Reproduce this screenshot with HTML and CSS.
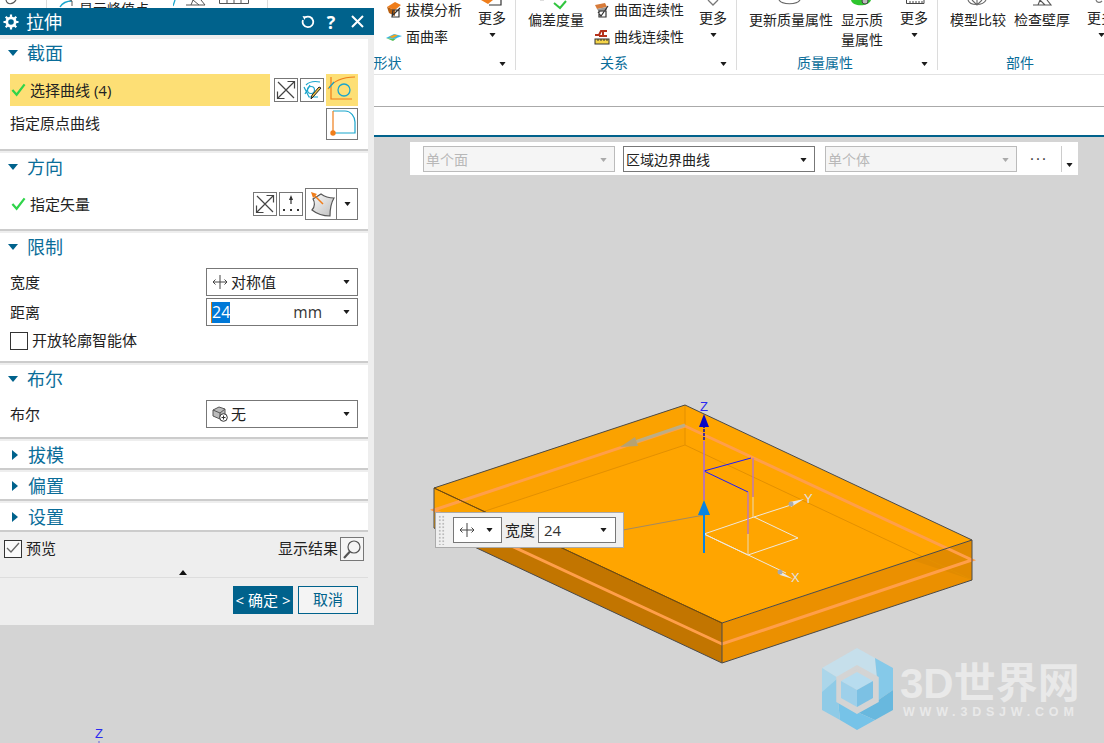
FILE: index.html
```html
<!DOCTYPE html>
<html lang="zh">
<head>
<meta charset="utf-8">
<title>拉伸</title>
<link rel="stylesheet" href="styles.css">
</head>
<body>
<svg class="defs" width="0" height="0" aria-hidden="true">
  <defs>
    <linearGradient id="g-sheet" x1="0" y1="0" x2="1" y2="1"><stop offset="0" stop-color="#fafafa"/><stop offset="1" stop-color="#bdbdbd"/></linearGradient>
  </defs>
  <symbol id="i-check" viewBox="0 0 16 16"><path d="M1.500 8.500 L6 13.500 L14.500 2.500" fill="none" stroke="#2fd44a" stroke-width="2.400"/></symbol>
  <symbol id="i-cross" viewBox="0 0 22 22"><path d="M3 3 L19 19 M19 3 L3 19" stroke="#444" stroke-width="1.200" fill="none"/><path d="M12.500 2.500 H19.500 V9.500 M2.500 12.500 V19.500 H9.500" stroke="#444" stroke-width="1.200" fill="none"/></symbol>
  <symbol id="i-caret" viewBox="0 0 8 5"><path d="M0 0 H8 L4 5 Z" fill="#1c1c1c"/></symbol>
  <symbol id="i-width" viewBox="0 0 16 16"><path d="M8 1 V15 M1 8 H15 M3.500 5.500 L1 8 L3.500 10.500 M12.500 5.500 L15 8 L12.500 10.500" stroke="#444" stroke-width="1" fill="none"/></symbol>
</svg>

<div class="app">
  <header class="ribbon">
    <section class="group g0">
      <div class="group-body"><svg class="peek peek-a" width="14" height="6" viewBox="0 0 14 6"><path d="M2 0 C3 5 9 5 12 0" fill="none" stroke="#555" stroke-width="1.200"/></svg></div>
    </section>
    <section class="group g1">
      <div class="group-body">
        <svg class="peek peek-b" width="14" height="10" viewBox="0 0 14 10"><path d="M1 9 C4 4 8 3 13 3" fill="none" stroke="#19a5cc" stroke-width="1.400"/><path d="M9 1 L13 3 V8" fill="none" stroke="#555"/></svg>
        <span class="peek-text">显示峰值点</span>
        <svg class="peek peek-c" width="36" height="8" viewBox="0 0 36 8"><path d="M0 6 L2 0" stroke="#19a5cc" stroke-width="1.300"/><path d="M13 5 H32 L28 0 M18 5 L20 0 L26 5" fill="none" stroke="#555"/></svg>
        <svg class="peek peek-d" width="30" height="4" viewBox="0 0 30 4"><path d="M0.500 0 V3.500 H29.500 V0 M8 0 V3 M15 0 V3 M22 0 V3" fill="none" stroke="#555"/></svg>
      </div>
    </section>
    <section class="group g2">
      <div class="group-body">
        <div class="tools tools-shape">
          <div class="tool"><svg class="icon16" viewBox="0 0 16 16"><path d="M1 5 L9 0 L15 3 L9 8 Z" fill="#ef7d1a"/><path d="M1 5 L9 8 V14 L3 11 Z" fill="#b85f10"/><path d="M6 14 L14 6 M7 8 H13 V15 H6 Z" fill="none" stroke="#333" stroke-width="1.200"/></svg><span>拔模分析</span></div>
          <div class="tool"><svg class="icon16" viewBox="0 0 16 16"><path d="M0 9 L8 5 L16 7 L8 10 Z" fill="#35b6e8"/><path d="M3 8 L9 5.500 L12 6.500 L7 9 Z" fill="#f4a21e"/><path d="M0 9 L8 10 L11 9 L7 12 Z" fill="#57c05a"/></svg><span>面曲率</span></div>
        </div>
        <div class="more more-shape">
          <svg class="more-peek" width="22" height="8" viewBox="0 0 22 8"><path d="M0 0 H12 L7 4 Z" fill="#ef7d1a"/><path d="M8 5 H20 V0" fill="none" stroke="#333" stroke-width="1.200"/></svg>
          <span>更多</span>
          <svg class="caret" viewBox="0 0 8 5"><use href="#i-caret"/></svg>
        </div>
      </div>
      <div class="group-label label-shape"><span>形状</span><svg class="caret-end" viewBox="0 0 8 5"><use href="#i-caret"/></svg></div>
    </section>
    <section class="group g3">
      <div class="group-body">
        <div class="big big-dev">
          <svg class="big-peek" width="56" height="10" viewBox="0 0 56 10"><path d="M26 3 L32 8 L38 1" fill="none" stroke="#31c53f" stroke-width="2"/><path d="M12 0 H16" stroke="#bbb"/></svg>
          <span>偏差度量</span>
        </div>
        <div class="tools tools-rel">
          <div class="tool"><svg class="icon16" viewBox="0 0 16 16"><path d="M1 3 L11 1 L13 5 L3 7 Z" fill="#d77b3a"/><path d="M3 7 L13 5 L13 8 L5 10 Z" fill="#999"/><path d="M4 10 L7 14 L14 4 M5 9 H12 V15 H5 Z" fill="none" stroke="#333" stroke-width="1.200"/></svg><span>曲面连续性</span></div>
          <div class="tool"><svg class="icon16" viewBox="0 0 16 16"><path d="M1 6 H5 L7 2 H13 M9 2 V7 M5 7 H13" fill="none" stroke="#b5321c" stroke-width="2"/><rect x="1" y="10" width="14" height="5" fill="#f5d54a" stroke="#333" stroke-width="1"/><path d="M4 10 V12 M7 10 V12 M10 10 V12 M13 10 V12" stroke="#333"/></svg><span>曲线连续性</span></div>
        </div>
        <div class="more more-rel">
          <svg class="more-peek" width="14" height="8" viewBox="0 0 14 8"><path d="M2 0 L7 5 L12 0" fill="none" stroke="#777" stroke-width="1.300"/></svg>
          <span>更多</span>
          <svg class="caret" viewBox="0 0 8 5"><use href="#i-caret"/></svg>
        </div>
      </div>
      <div class="group-label label-left"><span>关系</span><svg class="caret-end" viewBox="0 0 8 5"><use href="#i-caret"/></svg></div>
    </section>
    <section class="group g4">
      <div class="group-body">
        <div class="big big-update">
          <svg class="big-peek" width="84" height="10" viewBox="0 0 84 10"><path d="M30 0 C33 5 48 5 51 0" fill="none" stroke="#666" stroke-width="1.200"/></svg>
          <span>更新质量属性</span>
        </div>
        <div class="big big-show">
          <svg class="big-peek" width="42" height="10" viewBox="0 0 42 10"><path d="M10 0 C11 7 28 7 30 0 Z" fill="#2ec52e"/><circle cx="24" cy="1" r="3" fill="#bbb" stroke="#444"/></svg>
          <span>显示质<br>量属性</span>
        </div>
        <div class="more more-mass">
          <svg class="more-peek" width="22" height="8" viewBox="0 0 22 8"><path d="M3.500 0 V3.500 H21 V0 M7 3 V1 M10 3 V1 M13 3 V1 M16 3 V1 M19 3 V1" fill="none" stroke="#444"/></svg>
          <span>更多</span>
          <svg class="caret" viewBox="0 0 8 5"><use href="#i-caret"/></svg>
        </div>
      </div>
      <div class="group-label label-left"><span>质量属性</span><svg class="caret-end" viewBox="0 0 8 5"><use href="#i-caret"/></svg></div>
    </section>
    <section class="group g5">
      <div class="group-body">
        <div class="big big-model">
          <svg class="big-peek" width="56" height="10" viewBox="0 0 56 10"><path d="M18 0 C20 6 33 6 36 0 M27 5 V0 M22 0 L27 5 L32 0" fill="none" stroke="#666" stroke-width="1.100"/></svg>
          <span>模型比较</span>
        </div>
        <div class="big big-wall">
          <svg class="big-peek" width="56" height="10" viewBox="0 0 56 10"><path d="M19 5 H37 L33 0 M24 5 L26 0 L31 5" fill="none" stroke="#555" stroke-width="1.100"/></svg>
          <span>检查壁厚</span>
        </div>
        <div class="more more-part">
          <svg class="more-peek" width="14" height="8" viewBox="0 0 14 8"><path d="M2 0 C3 3 6 3 8 1" fill="none" stroke="#777" stroke-width="1.200"/></svg>
          <span>更多</span>
          <svg class="caret" viewBox="0 0 8 5"><use href="#i-caret"/></svg>
        </div>
      </div>
      <div class="group-label label-part"><span>部件</span></div>
    </section>
  </header>

  <div class="band band-one"></div>
  <div class="band band-two"></div>

  <main class="viewport">
    <svg class="scene" viewBox="0 137 1104 606" width="1104" height="606">
      <polygon points="434,488 722,623 722,663 434,528" fill="#c27500"/>
      <polygon points="722,623 972,540 972,580 722,663" fill="#eb9000"/>
      <polygon points="434,488 685,405 972,540 722,623" fill="#ffa500"/>
      <polygon points="685,405 685,445 434,528 434,488" fill="#fba200"/>
      <polygon points="912,560 972,540 972,580" fill="#e28b00"/>
      <path d="M434 528 L685 445 L972 580 M685 405 V445" fill="none" stroke="#e39000" stroke-width="1"/>
      <path d="M434 510 L685 426 L972 560 L722 644 Z" fill="none" stroke="#ff9f4a" stroke-width="3"/>
      <path d="M434 488 L685 405 L972 540 L722 623 Z M434 488 V528 L722 663 L972 580 V540 M722 623 V663" fill="none" stroke="#4a4a4a" stroke-width="1"/>
      <path d="M434 488 L722 623" stroke="#7a4c00" stroke-width="1"/>

      <path d="M685 425 L632 443" stroke="#bcae86" stroke-width="3"/>
      <path d="M620 447 L635 437 L638 446 Z" fill="#b5a274"/>

      <path d="M623 530 L704 515" stroke="#a68a5e" stroke-width="1.200"/>

      <path d="M704 534 L754 517 L798 538 L748 555 Z" fill="none" stroke="#eee8de" stroke-width="1"/>
      <path d="M754 517 L794 504 M704 534 L786 573" stroke="#eee8de" stroke-width="1"/>
      <path d="M804 499 L790 502 L791 507 Z" fill="#e8e8e8"/>
      <path d="M793 579 L778 570 L780 575 Z" fill="#e8e8e8"/>
      <circle cx="791" cy="504" r="2.500" fill="#aaa"/>
      <circle cx="780" cy="572" r="2.500" fill="#aaa"/>
      <path d="M704 471 L751 458 M704 471 L748 492" stroke="#1a1aff" stroke-width="1"/>
      <path d="M753 458 V497 M748 492 V534" stroke="#b070e0" stroke-width="1.200"/>
      <path d="M753 497 V517 M748 534 V555" stroke="#ecd9b8" stroke-width="1"/>
      <path d="M704 425 V441" stroke="#0a0ab0" stroke-width="1.500" stroke-dasharray="3 1"/>
      <path d="M704 441 V500" stroke="#a86ae0" stroke-width="1.500"/>
      <path d="M704 512 V553" stroke="#0a84e0" stroke-width="2"/>
      <path d="M704 500 L698 515 H710 Z" fill="#0a84e0"/>
      <path d="M704 414 L699 427 H709 Z" fill="#0808c8"/>
      <text class="axis axis-z" x="700" y="411">Z</text>
      <text class="axis axis-w" x="804" y="503">Y</text>
      <text class="axis axis-w" x="791" y="582">X</text>
      <text class="axis axis-z" x="95" y="738">Z</text>
      <rect x="98" y="741" width="2" height="2" fill="#9a9ad8"/>

      <g class="logo">
        <polygon points="857,648 875,658 877,678 857,667 838,678 822,668" fill="#c6dfeb"/>
        <polygon points="875,658 893,668 893,690 877,701 877,678" fill="#85c9e9"/>
        <polygon points="893,690 893,710 875,720 857,712 877,701" fill="#68b8de"/>
        <polygon points="857,712 875,720 857,730 840,720 838,701" fill="#76c3e8"/>
        <polygon points="838,701 840,720 822,710 822,690 838,678" fill="#8fcbe7"/>
        <polygon points="822,668 838,678 822,692" fill="#abd6ea"/>
        <polygon points="857,667 877,678 877,701 857,712 838,701 838,678" fill="none" stroke="#d4d4d4" stroke-width="3.500"/>
        <polygon points="857,672 873,681 857,690 841,681" fill="#b7dcef"/>
        <polygon points="841,681 857,690 857,707 841,698" fill="#9ed0ea"/>
        <polygon points="873,681 857,690 857,707 873,698" fill="#7cc1e4"/>
      </g>
      <text class="logo-title" x="900" y="698">3D世界网</text>
      <text class="logo-sub" x="903" y="716">WWW.3DSJW.COM</text>
    </svg>

    <div class="filterbar">
      <div class="combo combo-off"><span>单个面</span><svg class="caret" viewBox="0 0 8 5"><path d="M0 0 H8 L4 5 Z" fill="#aaa"/></svg></div>
      <div class="combo combo-on"><span>区域边界曲线</span><svg class="caret" viewBox="0 0 8 5"><use href="#i-caret"/></svg></div>
      <div class="combo combo-off combo-last"><span>单个体</span><svg class="caret" viewBox="0 0 8 5"><path d="M0 0 H8 L4 5 Z" fill="#aaa"/></svg></div>
      <div class="filter-dots">···</div>
      <div class="filter-end"><svg class="caret" viewBox="0 0 8 5"><use href="#i-caret"/></svg></div>
    </div>

    <div class="popup">
      <div class="grip"></div>
      <div class="pop-select pop-a"><svg class="icon16" viewBox="0 0 16 16"><use href="#i-width"/></svg><svg class="caret" viewBox="0 0 8 5"><use href="#i-caret"/></svg></div>
      <span class="pop-label">宽度</span>
      <div class="pop-select pop-b"><span>24</span><svg class="caret" viewBox="0 0 8 5"><use href="#i-caret"/></svg></div>
    </div>
  </main>

  <aside class="dialog">
    <div class="titlebar">
      <svg class="gear" width="16" height="16" viewBox="0 0 16 16"><circle cx="8" cy="8" r="4.200" fill="none" stroke="#fff" stroke-width="2.800"/><path d="M8 0.500 V3 M8 13 V15.500 M0.500 8 H3 M13 8 H15.500 M2.700 2.700 L4.500 4.500 M11.500 11.500 L13.300 13.300 M13.300 2.700 L11.500 4.500 M4.500 11.500 L2.700 13.300" stroke="#fff" stroke-width="2.200"/></svg>
      <span class="title">拉伸</span>
      <svg class="title-btn" width="14" height="14" viewBox="0 0 14 14"><path d="M4 2.500 A5.300 5.300 0 1 1 2 5" fill="none" stroke="#fff" stroke-width="1.800"/><path d="M1.500 1 L5 1.500 L3.500 5 Z" fill="#fff"/></svg>
      <span class="title-q">?</span>
      <svg class="title-x" width="13" height="13" viewBox="0 0 13 13"><path d="M1 1 L12 12 M12 1 L1 12" stroke="#fff" stroke-width="2"/></svg>
    </div>

    <section class="sec">
      <div class="sec-head"><i class="tri-down"></i><span>截面</span></div>
      <div class="row">
        <div class="picked"><svg class="check" viewBox="0 0 16 16"><use href="#i-check"/></svg><span>选择曲线 (4)</span></div>
        <button class="ib ib-first"><svg viewBox="0 0 22 22"><use href="#i-cross"/></svg></button>
        <button class="ib"><svg viewBox="0 0 22 22"><path d="M3 8 L8 18 H17 M5 6 C9 2 14 2 19 3 M9 6 L4 15" fill="none" stroke="#19a5cc" stroke-width="1.200"/><circle cx="10" cy="11" r="3.500" fill="none" stroke="#19a5cc" stroke-width="1.200"/><path d="M20 9 L12 18 L10 20 L11 16 L18 8 Z" fill="#f0c040" stroke="#222" stroke-width="1"/></svg></button>
        <div class="ib-hot"><svg viewBox="0 0 32 32"><path d="M5 3 V25 H26" fill="none" stroke="#ef7d1a" stroke-width="1.200"/><path d="M2 15 C8 6 18 3 29 3" fill="none" stroke="#ef7d1a" stroke-width="1.200"/><path d="M8 8 L3 14" stroke="#19a5cc" stroke-width="1.200"/><circle cx="18" cy="16" r="6" fill="none" stroke="#19a5cc" stroke-width="1.300"/></svg></div>
      </div>
      <div class="row row-second">
        <span class="lbl lbl-up">指定原点曲线</span>
        <button class="ib-big"><svg viewBox="0 0 30 30"><path d="M6 2 H18 C24 2 28 8 28 13 V24 H6" fill="none" stroke="#19a5cc" stroke-width="1.200"/><path d="M6 2 V24" stroke="#ef7d1a" stroke-width="1.200"/><circle cx="6" cy="24" r="2.700" fill="#ef7d1a"/></svg></button>
      </div>
    </section>

    <section class="sec">
      <div class="sec-head"><i class="tri-down"></i><span>方向</span></div>
      <div class="row">
        <div class="lbl-check"><svg class="check" viewBox="0 0 16 16"><use href="#i-check"/></svg><span>指定矢量</span></div>
        <button class="ib"><svg viewBox="0 0 22 22"><use href="#i-cross"/></svg></button>
        <button class="ib"><svg viewBox="0 0 22 22"><path d="M11 4 V11" stroke="#333" stroke-width="1.200"/><path d="M11 2 L9 7 H13 Z" fill="#333"/><path d="M3 17 H5 M10 17 H12 M17 17 H19" stroke="#333" stroke-width="2"/></svg></button>
        <div class="split">
          <div class="split-main"><svg viewBox="0 0 30 30"><path d="M7 10 L15 5 C19 8 24 9 28 9 C25 14 24 20 24 27 C18 27 11 25 6 21 C9 18 9 13 7 10 Z" fill="url(#g-sheet)" stroke="#555" stroke-width="1.200"/><path d="M17 15 L7 5" stroke="#ef7d1a" stroke-width="1.500"/><path d="M5 3 L11 5 L7 9 Z" fill="#ef7d1a"/></svg></div>
          <div class="split-drop"><svg class="caret" viewBox="0 0 8 5"><use href="#i-caret"/></svg></div>
        </div>
      </div>
    </section>

    <section class="sec">
      <div class="sec-head"><i class="tri-down"></i><span>限制</span></div>
      <div class="row row-field">
        <span class="lbl">宽度</span>
        <div class="field"><svg class="icon16" viewBox="0 0 16 16"><use href="#i-width"/></svg><span class="field-text">对称值</span><svg class="caret" viewBox="0 0 8 5"><use href="#i-caret"/></svg></div>
      </div>
      <div class="row row-field row-gap">
        <span class="lbl">距离</span>
        <div class="field field-num"><span class="selected">24</span><span class="unit">mm</span><svg class="caret" viewBox="0 0 8 5"><use href="#i-caret"/></svg></div>
      </div>
      <label class="checkrow"><i class="box"></i><span>开放轮廓智能体</span></label>
    </section>

    <section class="sec">
      <div class="sec-head"><i class="tri-down"></i><span>布尔</span></div>
      <div class="row row-field">
        <span class="lbl">布尔</span>
        <div class="field"><svg class="icon16" viewBox="0 0 16 16"><path d="M1 4 L7 1 L13 3 V9 L8 13 L1 10 Z" fill="#bbb" stroke="#555"/><path d="M1 4 L8 7 L13 3 M8 7 V13" fill="none" stroke="#555"/><circle cx="11.500" cy="11.500" r="3.800" fill="#fff" stroke="#333"/><path d="M9.500 11.500 H13.500 M11.500 9.500 V13.500" stroke="#333"/></svg><span class="field-text">无</span><svg class="caret" viewBox="0 0 8 5"><use href="#i-caret"/></svg></div>
      </div>
    </section>

    <section class="sec sec-closed"><div class="sec-head"><i class="tri-right"></i><span>拔模</span></div></section>
    <section class="sec sec-closed"><div class="sec-head"><i class="tri-right"></i><span>偏置</span></div></section>
    <section class="sec sec-closed"><div class="sec-head"><i class="tri-right"></i><span>设置</span></div></section>

    <div class="preview">
      <i class="box box-checked"><svg width="16" height="14" viewBox="0 0 16 14"><path d="M2 7 L6 11 L14 2" fill="none" stroke="#666" stroke-width="1.300"/></svg></i>
      <span class="preview-label">预览</span>
      <span class="result">显示结果</span>
      <button class="ib ib-result"><svg viewBox="0 0 22 22"><circle cx="13" cy="9" r="6" fill="none" stroke="#555" stroke-width="1.200"/><path d="M9 13.500 L3 20" stroke="#555" stroke-width="2.200"/></svg></button>
    </div>
    <div class="collapse"><i class="tri-up"></i></div>
    <div class="actions">
      <button class="btn-ok">&lt; 确定 &gt;</button>
      <button class="btn-cancel">取消</button>
    </div>
  </aside>
</div>
</body>
</html>
```

FILE: styles.css
```css
* { box-sizing: border-box; }
html, body { margin: 0; padding: 0; }
body {
  font-family: "Open Sans", "Noto Sans CJK SC", sans-serif;
  font-size: 14px;
  color: #222;
  overflow: hidden;
}
button { font: inherit; padding: 0; margin: 0; background: #fff; }
svg { display: block; }
.defs { position: absolute; }

.app {
  position: relative;
  width: 1104px;
  height: 743px;
  display: flex;
  flex-direction: column;
  background: #d4d4d4;
  overflow: hidden;
}

/* Ribbon */
.ribbon {
  display: flex;
  height: 75px;
  flex: none;
  background: #fff;
  border-bottom: 1px solid #e2e2e2;
}
.group {
  display: flex;
  flex-direction: column;
  height: 70px;
  border-right: 1px solid #dcdcdc;
  flex: none;
}
.g0 { width: 47px; }
.g1 { width: 221px; }
.g2 { width: 248px; }
.g3 { width: 221px; }
.g4 { width: 201px; }
.g5 { width: 166px; border-right: 0; }
.group-body {
  display: flex;
  flex: none;
  height: 54px;
  overflow: visible;
}
.group-label {
  position: relative;
  height: 18px;
  line-height: 18px;
  text-align: center;
  color: #0a6d99;
  font-size: 14px;
}
.label-shape { padding-right: 8px; }
.label-left { padding-right: 24px; }
.label-part { padding-right: 2px; }
.caret-end {
  position: absolute;
  right: 9px;
  top: 8px;
  width: 7px;
  height: 4px;
}
.peek-a { margin: 0 0 0 4px; }
.peek-b { margin: -2px 0 0 12px; }
.peek-text { margin: -1px 0 0 6px; width: 70px; line-height: 20px; height: 20px; white-space: nowrap; }
.peek-c { margin: 0 0 0 24px; }
.peek-d { margin: 0 0 0 10px; }

.tools { display: flex; flex-direction: column; margin-top: -4px; flex: none; }
.tool { display: flex; align-items: center; gap: 4px; height: 27px; white-space: nowrap; line-height: 20px; font-size: 14px; }
.icon16 { width: 16px; height: 16px; flex: none; }
.tools-shape { width: 92px; margin-left: 118px; }
.tools-rel { width: 105px; margin-left: 10px; }

.more { width: 28px; flex: none; display: flex; flex-direction: column; align-items: center; line-height: 20px; white-space: nowrap; }
.more-peek { height: 8px; flex: none; align-self: center; }
.caret { width: 7px; height: 4px; flex: none; }
.more .caret { margin-top: 5px; }
.more-part { margin-left: 17px; }
.more-mass { margin-left: 17px; }

.big { flex: none; display: flex; flex-direction: column; line-height: 20px; text-align: center; white-space: nowrap; }
.big-peek { flex: none; }
.big-dev { width: 56px; margin-left: 12px; }
.big-update { width: 84px; margin-left: 12px; }
.big-show { width: 42px; margin-left: 8px; }
.big-model { width: 56px; margin-left: 12px; }
.big-wall { width: 56px; margin-left: 8px; }

.band { flex: none; background: #fff; }
.band-one { height: 32px; border-bottom: 1px solid #aaa; }
.band-two { height: 30px; border-bottom: 2px solid #00628c; }

/* Graphics window */
.viewport { position: relative; flex: 1; }
.scene { position: absolute; left: 0; top: 0; }
.axis { font-family: "Liberation Sans", sans-serif; font-size: 13px; }
.axis-z { fill: #2a2af0; }
.axis-w { fill: #e0e0e0; }
.logo-title {
  font-family: "Liberation Sans", "Noto Sans CJK SC", sans-serif;
  font-weight: 700;
  font-size: 42px;
  fill: #e9e9e9;
}
.logo-sub {
  font-family: "Liberation Sans", sans-serif;
  font-weight: 700;
  font-size: 12.500px;
  letter-spacing: 4.800px;
  fill: #e9e9e9;
}

.filterbar {
  position: absolute;
  left: 410px;
  top: 5px;
  width: 668px;
  height: 33px;
  background: #fff;
  display: flex;
  padding: 4px 0 0 13px;
}
.combo {
  width: 192px;
  height: 26px;
  display: flex;
  align-items: center;
  justify-content: space-between;
  padding: 1px 7px 0 2px;
  line-height: 20px;
  font-size: 14px;
  border: 1px solid #777;
  margin-right: 8px;
  flex: none;
}
.combo-off { background: #f5f5f5; border-color: #bbb; color: #b8b8b8; }
.combo-last { margin-right: 0; margin-left: 2px; }
.filter-dots { width: 44px; text-align: center; font-size: 15px; letter-spacing: 2px; line-height: 24px; color: #333; flex: none; }
.filter-end {
  width: 17px;
  height: 26px;
  border-left: 1px solid #ccc;
  flex: none;
  padding: 17px 0 0 4px;
}

.popup {
  position: absolute;
  left: 435px;
  top: 375px;
  width: 189px;
  height: 36px;
  background: #efefef;
  border: 1px solid #aaa;
  display: flex;
  align-items: center;
}
.grip {
  width: 7px;
  height: 30px;
  margin-left: 2px;
  flex: none;
  background-image: radial-gradient(#bbb 1px, transparent 1.300px);
  background-size: 3.500px 3.500px;
}
.pop-select {
  height: 26px;
  background: #fff;
  border: 1px solid #777;
  display: flex;
  align-items: center;
  justify-content: space-between;
  padding: 0 8px 0 5px;
  flex: none;
}
.pop-a { width: 49px; margin-left: 8px; }
.pop-b { width: 78px; font-size: 15px; line-height: 20px; color: #333; }
.pop-label { width: 36px; text-align: center; line-height: 20px; font-size: 15px; flex: none; }

/* Dialog */
.dialog {
  position: absolute;
  left: 0;
  top: 8px;
  width: 374px;
  height: 617px;
  background: #eee;
  display: flex;
  flex-direction: column;
}
.titlebar {
  height: 27px;
  background: #00628c;
  color: #fff;
  display: flex;
  align-items: center;
  margin-bottom: 4px;
  flex: none;
}
.gear { margin-left: 3px; flex: none; }
.title { margin-left: 7px; font-size: 18px; line-height: 24px; flex: 1; }
.title-btn { flex: none; margin-right: 9px; }
.title-q { flex: none; width: 14px; font-size: 18px; font-weight: 700; line-height: 24px; text-align: center; margin-right: 13px; }
.title-x { flex: none; margin-right: 10px; }

.sec {
  width: 368px;
  background: #fff;
  border-bottom: 2px solid #ccc;
  margin-bottom: 2px;
  flex: none;
  padding-bottom: 9px;
}
.sec-head {
  height: 30px;
  margin-bottom: 5px;
  padding-bottom: 2px;
  display: flex;
  align-items: center;
  color: #0a6d99;
  font-size: 18px;
  line-height: 24px;
}
.sec-head span { margin-left: 9px; }
.tri-down {
  margin-left: 8px;
  width: 0; height: 0;
  border-left: 5.500px solid transparent;
  border-right: 5.500px solid transparent;
  border-top: 6px solid #00628c;
  flex: none;
}
.tri-right {
  margin-left: 12px;
  margin-right: 1px;
  width: 0; height: 0;
  border-top: 5.500px solid transparent;
  border-bottom: 5.500px solid transparent;
  border-left: 6px solid #00628c;
  flex: none;
}
.sec-closed { padding-bottom: 0; }
.sec-closed .sec-head { height: 27px; margin: 0; padding: 1px 0 0; }
.row {
  display: flex;
  align-items: center;
  padding: 0 10px;
  height: 32px;
}
.row-second { margin-top: 2px; justify-content: space-between; }
.row-field { height: 28px; justify-content: space-between; }
.row-gap { margin-top: 2px; }
.lbl { line-height: 20px; font-size: 15px; }
.lbl-up { padding-bottom: 2px; line-height: 20px; }
.picked {
  width: 260px;
  height: 32px;
  background: #fddf75;
  display: flex;
  align-items: center;
  padding: 0 0 1px 1px;
  gap: 4px;
  line-height: 20px;
  font-size: 15px;
}
.lbl-check {
  flex: 1;
  display: flex;
  align-items: center;
  padding: 0 0 1px 1px;
  gap: 4px;
  line-height: 20px;
  font-size: 15px;
}
.check { width: 15px; height: 15px; flex: none; }
.ib {
  width: 24px;
  height: 24px;
  border: 1px solid #777;
  margin-right: 2px;
  flex: none;
}
.ib svg { width: 22px; height: 22px; }
.ib-first { margin-left: 4px; }
.ib-hot { width: 32px; height: 32px; background: #fddf75; flex: none; }
.ib-big { width: 32px; height: 32px; border: 1px solid #777; flex: none; }
.ib-big svg { width: 30px; height: 30px; }
.split {
  width: 53px;
  height: 32px;
  border: 1px solid #777;
  display: flex;
  flex: none;
}
.split-main { width: 30px; height: 30px; flex: none; }
.split-main svg { width: 30px; height: 30px; }
.split-drop {
  flex: 1;
  border-left: 1px solid #777;
  display: flex;
  align-items: center;
  justify-content: center;
}
.field {
  width: 152px;
  height: 28px;
  border: 1px solid #777;
  display: flex;
  align-items: center;
  padding: 0 7px 0 5px;
  background: #fff;
  line-height: 20px;
  font-size: 15px;
}
.field-text { flex: 1; margin-left: 3px; }
.field-num { padding-left: 4px; }
.selected {
  background: #0078d7;
  color: #fff;
  width: 19px;
  height: 21px;
  line-height: 21px;
  font-size: 16px;
  border-left: 1px solid #d87a10;
  flex: none;
  overflow: hidden;
  white-space: nowrap;
}
.unit { flex: 1; text-align: right; padding-right: 21px; font-size: 15.500px; color: #333; }
.checkrow {
  display: flex;
  align-items: center;
  gap: 4px;
  padding-left: 10px;
  margin-top: 5px;
  margin-bottom: 2px;
  height: 19px;
  line-height: 19px;
  font-size: 15px;
}
.box {
  width: 18px;
  height: 18px;
  background: #fff;
  border: 1px solid #333;
  flex: none;
  display: block;
}
.preview {
  display: flex;
  align-items: center;
  height: 24px;
  margin-top: 3px;
  padding-left: 4px;
  flex: none;
}
.box-checked { background: #fafafa; }
.preview-label { margin-left: 4px; flex: 1; line-height: 20px; font-size: 15px; padding-bottom: 2px; }
.result { margin-right: 2px; line-height: 20px; font-size: 15px; padding-bottom: 2px; }
.ib-result { margin-right: 10px; background: #f5f5f5; }
.collapse {
  height: 17px;
  border-bottom: 1px solid #ddd;
  width: 368px;
  padding-top: 9px;
  flex: none;
}
.tri-up {
  display: block;
  margin-left: 179px;
  width: 0; height: 0;
  border-left: 4.500px solid transparent;
  border-right: 4.500px solid transparent;
  border-bottom: 5px solid #111;
}
.actions {
  display: flex;
  justify-content: flex-end;
  gap: 5px;
  padding: 8px 16px 0 0;
  flex: none;
}
.btn-ok, .btn-cancel {
  width: 60px;
  height: 28px;
  line-height: 20px;
  font-size: 15px;
  font-family: "Open Sans", "Noto Sans CJK SC", sans-serif;
}
.btn-ok { background: #00628c; color: #fff; border: 0; white-space: nowrap; }
.btn-cancel { background: #f4f4f4; color: #00628c; border: 1px solid #00628c; padding-bottom: 2px; }
```
